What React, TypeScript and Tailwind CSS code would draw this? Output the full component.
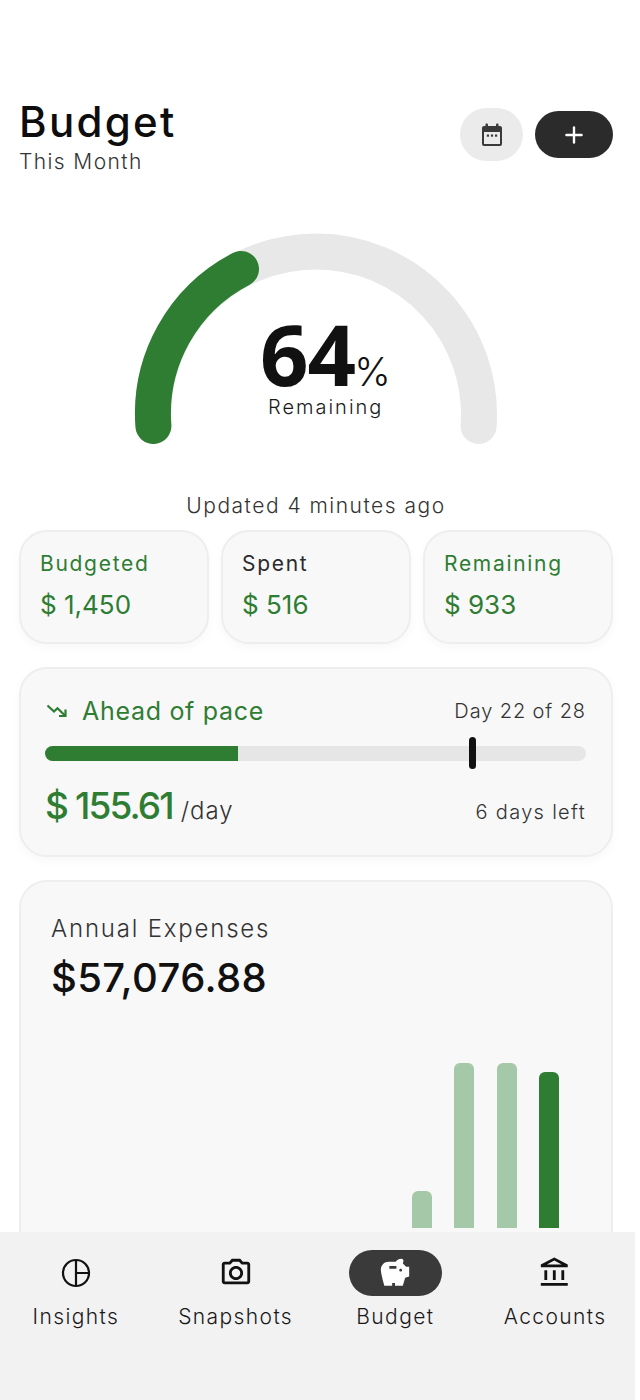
import { Plus } from 'lucide-react';
import { MdOutlineAccountBalance, MdOutlinePhotoCamera, MdSavings } from 'react-icons/md';

const sans = 'font-["Inter",sans-serif]';

const stats = [
  { label: 'Budgeted', value: '$ 1,450', labelColor: 'text-[#2e7d32]' },
  { label: 'Spent', value: '$ 516', labelColor: 'text-[#2b2b2b]' },
  { label: 'Remaining', value: '$ 933', labelColor: 'text-[#2e7d32]' },
];

const bars = [
  { height: 'h-[37px]', color: 'bg-[#a5c8a8]' },
  { height: 'h-[165px]', color: 'bg-[#a5c8a8]' },
  { height: 'h-[165px]', color: 'bg-[#a5c8a8]' },
  { height: 'h-[156px]', color: 'bg-[#2e7d32]' },
];

function CalendarIcon() {
  return (
    <svg width="24" height="26" viewBox="0 0 24 26" fill="none">
      <rect x="2" y="4" width="20" height="20" rx="2" fill="#3a3a3a" />
      <rect x="4" y="10" width="16" height="12" fill="#ebebeb" />
      <rect x="5.5" y="1.5" width="2.5" height="5" rx="1" fill="#3a3a3a" />
      <rect x="16" y="1.5" width="2.5" height="5" rx="1" fill="#3a3a3a" />
      <rect x="6.8" y="12.5" width="2.2" height="2.2" fill="#3a3a3a" />
      <rect x="10.9" y="12.5" width="2.2" height="2.2" fill="#3a3a3a" />
      <rect x="15" y="12.5" width="2.2" height="2.2" fill="#3a3a3a" />
    </svg>
  );
}

function InsightsIcon() {
  return (
    <svg width="30" height="30" viewBox="0 0 30 30" fill="none" stroke="#111" strokeWidth="2.2">
      <circle cx="15" cy="15" r="13" />
      <path d="M15 2v26M15 15h13" />
    </svg>
  );
}

function PaceIcon() {
  return (
    <svg width="24" height="24" viewBox="0 0 24 24" fill="none" stroke="#2e7d32" strokeWidth="2.2">
      <path d="M2.5 6.5 9 12.5l3.5-3.2 7.5 7.2" />
      <path d="M20.5 10.5v6.5H14" />
    </svg>
  );
}

function Gauge() {
  return (
    <div className="relative h-[261px] w-full">
      <svg width="632" height="212" viewBox="0 0 632 212" fill="none">
        <path d="M153.4 193 A163 163 0 1 1 478.6 193" stroke="#e8e8e8" strokeWidth="36" strokeLinecap="round" />
        <path d="M153.4 193 A163 163 0 0 1 241 36" stroke="#2e7d32" strokeWidth="36" strokeLinecap="round" />
      </svg>
      <div className="absolute left-[260px] top-[82px] flex items-baseline">
        <span className='font-["Open_Sans",sans-serif] text-[85px] font-bold leading-[76px] tracking-[-1px] text-[#111]'>64</span>
        <span className="ml-[-1px] text-[39px] font-light leading-none text-[#111]">%</span>
      </div>
      <div className="absolute left-[268px] top-[162px] text-[20px] font-light leading-[24px] tracking-[2px] text-[#1a1a1a]">Remaining</div>
    </div>
  );
}

function NavItem({ label, icon, active }: { label: string; icon: React.ReactNode; active?: boolean }) {
  return (
    <div className="flex w-[160px] flex-col items-center">
      <div className={`flex h-[46px] w-[93px] items-center justify-center rounded-full ${active ? 'bg-[#3a3a3a] text-white' : 'text-[#111]'}`}>
        {icon}
      </div>
      <span className="mt-[8px] text-[21px] font-light leading-[26px] tracking-[1.4px] text-[#1a1a1a]">{label}</span>
    </div>
  );
}

export default function App() {
  return (
    <div className={`relative h-[1400px] w-[635px] overflow-hidden bg-white ${sans}`}>
      {/* Header */}
      <div className="flex items-start justify-between pl-[19px] pr-[22px] pt-[96px]">
        <div>
          <h1 className="text-[42px] font-medium leading-[52px] tracking-[2.3px] text-[#0d0d0d]">Budget</h1>
          <p className="mt-[1px] text-[21px] font-light leading-[26px] tracking-[1.4px] text-[#333]">This Month</p>
        </div>
        <div className="mt-[12px] flex items-center gap-3">
          <button className="flex h-[53px] w-[63px] items-center justify-center rounded-full bg-[#ebebeb]">
            <CalendarIcon />
          </button>
          <button className="flex h-[47px] w-[78px] items-center justify-center rounded-full bg-[#2b2b2b] text-white">
            <Plus size={26} strokeWidth={2.2} />
          </button>
        </div>
      </div>

      <div className="mt-[58px]">
        <Gauge />
      </div>

      <p className="mt-[-1px] pr-[3px] text-center text-[21px] font-light leading-[26px] tracking-[1.5px] text-[#333]">Updated 4 minutes ago</p>

      <div className="mx-[19px] mt-[11px] w-[594px]">
        {/* Stat cards */}
        <div className="grid grid-cols-3 gap-3">
          {stats.map((s) => (
            <div key={s.label} className="h-[114px] rounded-[28px] border-2 border-[#eeeeee] bg-[#f8f8f8] pl-[19px] pt-[19px] shadow-[0_4px_10px_rgba(0,0,0,0.03)]">
              <div className={`text-[21px] leading-[26px] tracking-[1.7px] ${s.labelColor}`}>{s.label}</div>
              <div className="mt-[12px] text-[26px] font-normal leading-[32px] text-[#2e7d32]">{s.value}</div>
            </div>
          ))}
        </div>

        {/* Pace card */}
        <div className="mt-[23px] h-[190px] rounded-[28px] border-2 border-[#eeeeee] bg-[#f8f8f8] pl-[24px] pr-[25px] pt-[26px] shadow-[0_4px_10px_rgba(0,0,0,0.03)]">
          <div className="flex items-center justify-between">
            <div className="flex items-center gap-[13px] text-[#2e7d32]">
              <PaceIcon />
              <span className="text-[25px] font-normal leading-[32px] tracking-[0.7px]">Ahead of pace</span>
            </div>
            <span className="text-[20px] font-light leading-[26px] tracking-[0.9px] text-[#333]">Day 22 of 28</span>
          </div>
          <div className="relative mt-[19px] h-[15px] rounded-full bg-[#e6e6e6]">
            <div className="h-full w-[193px] rounded-l-full bg-[#2e7d32]" />
            <div className="absolute left-[424px] top-[-9px] h-[32px] w-[7px] rounded-full bg-[#111]" />
          </div>
          <div className="mt-[21px] flex items-baseline justify-between">
            <div className="flex items-baseline gap-[8px]">
              <span className="text-[37px] font-medium leading-[48px] tracking-[-1.9px] text-[#2e7d32]">$ 155.61</span>
              <span className="text-[24px] font-light leading-[30px] tracking-[1px] text-[#333]">/day</span>
            </div>
            <span className="text-[20px] font-light leading-[26px] tracking-[1.3px] text-[#333]">6 days left</span>
          </div>
        </div>

        {/* Annual expenses */}
        <div className="mt-[23px] h-[500px] rounded-[28px] border-2 border-[#eeeeee] bg-[#f8f8f8] px-[30px] pt-[32px]">
          <div className="text-[24px] font-light leading-[30px] tracking-[1.8px] text-[#333]">Annual Expenses</div>
          <div className="mt-[9px] text-[40px] font-medium leading-[50px] tracking-[0.4px] text-[#111]">$57,076.88</div>
          <div className="mt-[60px] flex h-[165px] items-end justify-end gap-[22.3px] pr-[22px]">
            {bars.map((b, i) => (
              <div key={i} className={`w-[20px] rounded-t-[6px] ${b.height} ${b.color}`} />
            ))}
          </div>
        </div>
      </div>

      {/* Bottom nav */}
      <nav className="absolute bottom-0 left-[-4px] flex h-[168px] w-[639px] bg-[#f2f2f2] pt-[18px]">
        <NavItem label="Insights" icon={<InsightsIcon />} />
        <NavItem label="Snapshots" icon={<MdOutlinePhotoCamera size={34} />} />
        <NavItem label="Budget" icon={<MdSavings size={34} />} active />
        <NavItem label="Accounts" icon={<MdOutlineAccountBalance size={34} />} />
      </nav>
    </div>
  );
}
